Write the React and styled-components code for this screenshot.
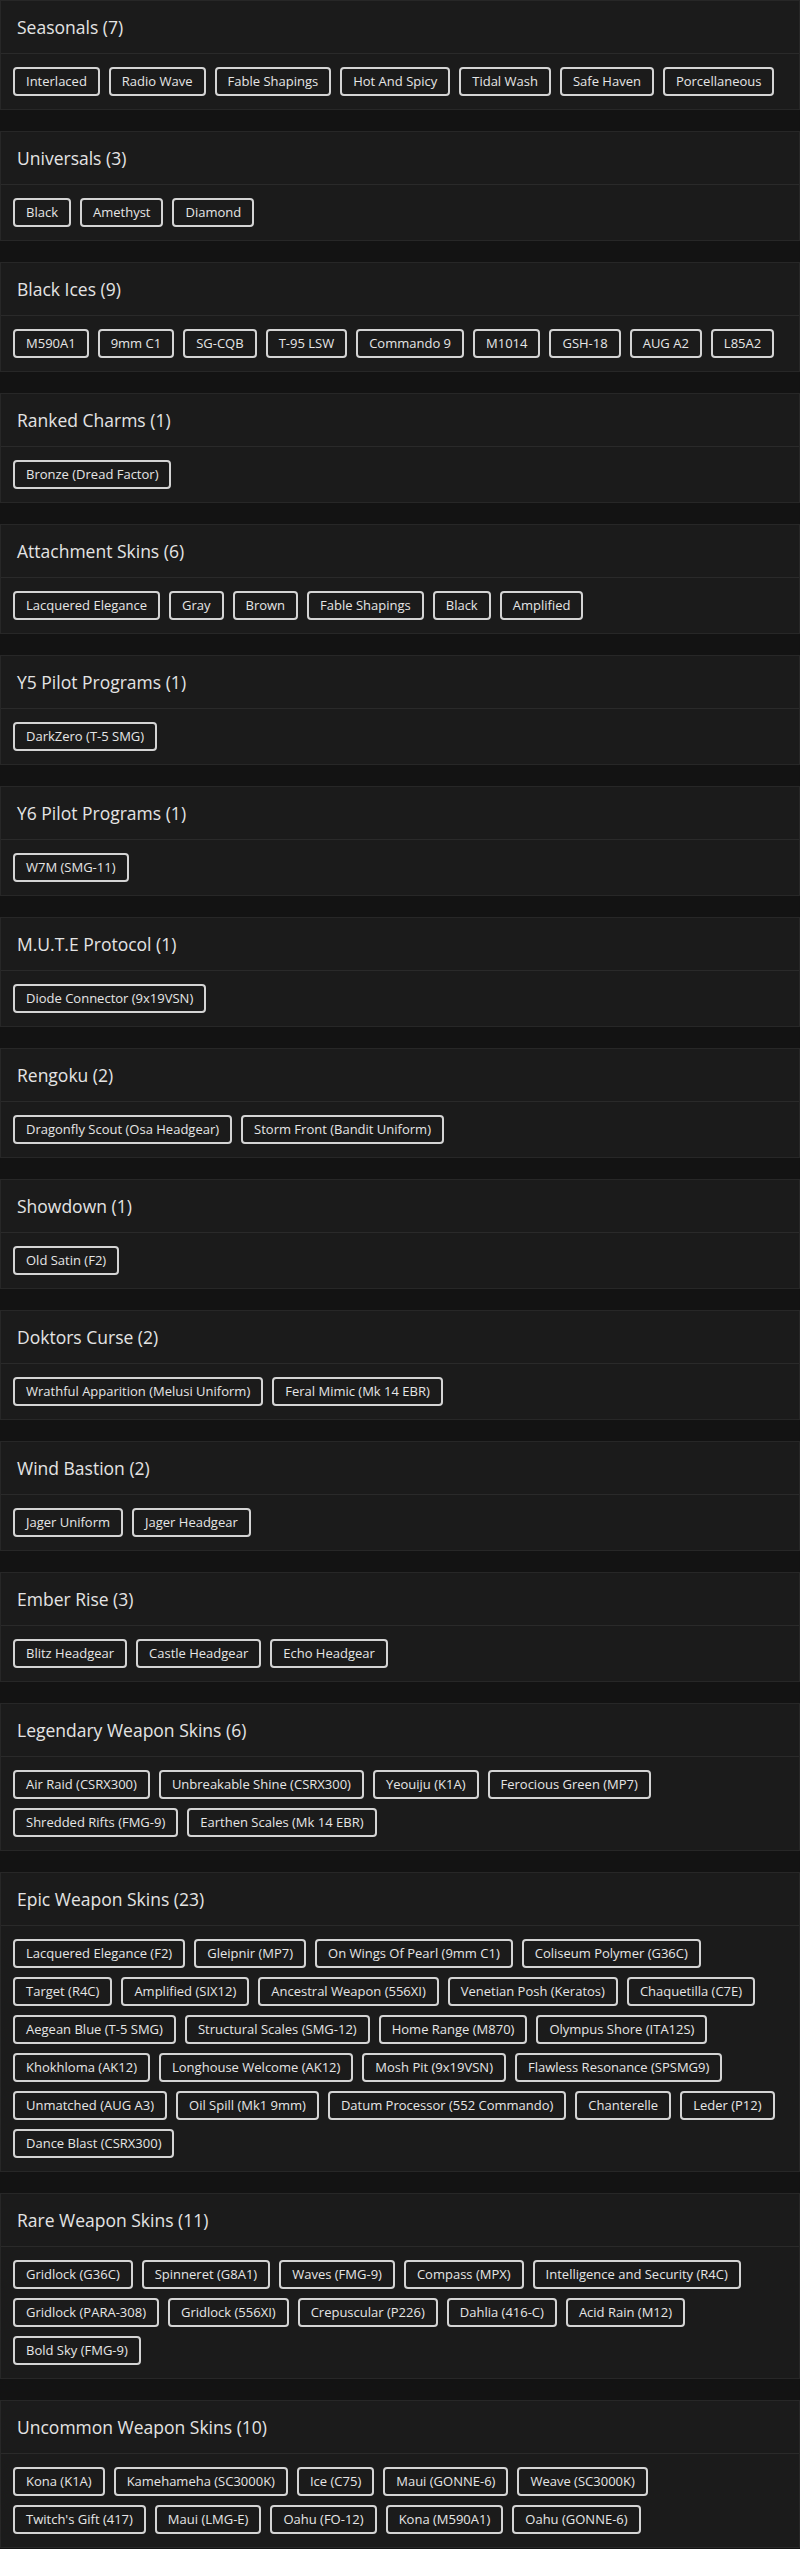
import React from 'react'
import styled, { createGlobalStyle } from 'styled-components'

const GlobalStyle = createGlobalStyle`
  body {
    margin: 0;
    background-color: #131313;
    font-family: "Open Sans", "Liberation Sans", sans-serif;
  }
`;

const sections = [
  { title: 'Seasonals', items: ['Interlaced', 'Radio Wave', 'Fable Shapings', 'Hot And Spicy', 'Tidal Wash', 'Safe Haven', 'Porcellaneous'] },
  { title: 'Universals', items: ['Black', 'Amethyst', 'Diamond'] },
  { title: 'Black Ices', items: ['M590A1', '9mm C1', 'SG-CQB', 'T-95 LSW', 'Commando 9', 'M1014', 'GSH-18', 'AUG A2', 'L85A2'] },
  { title: 'Ranked Charms', items: ['Bronze (Dread Factor)'] },
  { title: 'Attachment Skins', items: ['Lacquered Elegance', 'Gray', 'Brown', 'Fable Shapings', 'Black', 'Amplified'] },
  { title: 'Y5 Pilot Programs', items: ['DarkZero (T-5 SMG)'] },
  { title: 'Y6 Pilot Programs', items: ['W7M (SMG-11)'] },
  { title: 'M.U.T.E Protocol', items: ['Diode Connector (9x19VSN)'] },
  { title: 'Rengoku', items: ['Dragonfly Scout (Osa Headgear)', 'Storm Front (Bandit Uniform)'] },
  { title: 'Showdown', items: ['Old Satin (F2)'] },
  { title: 'Doktors Curse', items: ['Wrathful Apparition (Melusi Uniform)', 'Feral Mimic (Mk 14 EBR)'] },
  { title: 'Wind Bastion', items: ['Jager Uniform', 'Jager Headgear'] },
  { title: 'Ember Rise', items: ['Blitz Headgear', 'Castle Headgear', 'Echo Headgear'] },
  {
    title: 'Legendary Weapon Skins',
    items: ['Air Raid (CSRX300)', 'Unbreakable Shine (CSRX300)', 'Yeouiju (K1A)', 'Ferocious Green (MP7)', 'Shredded Rifts (FMG-9)', 'Earthen Scales (Mk 14 EBR)'],
  },
  {
    title: 'Epic Weapon Skins',
    items: [
      'Lacquered Elegance (F2)', 'Gleipnir (MP7)', 'On Wings Of Pearl (9mm C1)', 'Coliseum Polymer (G36C)',
      'Target (R4C)', 'Amplified (SIX12)', 'Ancestral Weapon (556XI)', 'Venetian Posh (Keratos)', 'Chaquetilla (C7E)',
      'Aegean Blue (T-5 SMG)', 'Structural Scales (SMG-12)', 'Home Range (M870)', 'Olympus Shore (ITA12S)',
      'Khokhloma (AK12)', 'Longhouse Welcome (AK12)', 'Mosh Pit (9x19VSN)', 'Flawless Resonance (SPSMG9)',
      'Unmatched (AUG A3)', 'Oil Spill (Mk1 9mm)', 'Datum Processor (552 Commando)', 'Chanterelle', 'Leder (P12)',
      'Dance Blast (CSRX300)',
    ],
  },
  {
    title: 'Rare Weapon Skins',
    items: [
      'Gridlock (G36C)', 'Spinneret (G8A1)', 'Waves (FMG-9)', 'Compass (MPX)', 'Intelligence and Security (R4C)',
      'Gridlock (PARA-308)', 'Gridlock (556XI)', 'Crepuscular (P226)', 'Dahlia (416-C)', 'Acid Rain (M12)',
      'Bold Sky (FMG-9)',
    ],
  },
  {
    title: 'Uncommon Weapon Skins',
    items: [
      'Kona (K1A)', 'Kamehameha (SC3000K)', 'Ice (C75)', 'Maui (GONNE-6)', 'Weave (SC3000K)',
      "Twitch's Gift (417)", 'Maui (LMG-E)', 'Oahu (FO-12)', 'Kona (M590A1)', 'Oahu (GONNE-6)',
    ],
  },
];

const Page = styled.div`
  display: flex;
  flex-direction: column;
  gap: 21px;
  padding-bottom: 1px;
`;

const Card = styled.section`
  background-color: #1b1b1b;
  border: 1px solid #272727;
`;

const Header = styled.div`
  padding: 15px 16px;
  border-bottom: 1px solid #2a2a2a;
`;

const Title = styled.h2`
  margin: 0;
  font-size: 17.5px;
  font-weight: 500;
  line-height: 22px;
  color: #e4e4e4;
`;

const Body = styled.div`
  display: flex;
  flex-wrap: wrap;
  gap: 9px;
  padding: 13px 12px;
`;

const Chip = styled.span`
  display: inline-flex;
  align-items: center;
  padding: 3px 11px;
  border: 2px solid #d4d4d4;
  border-radius: 4px;
  background-color: #1b1b1b;
  color: #e6e6e6;
  font-size: 13px;
  line-height: 19px;
  white-space: nowrap;
`;

const Section = ({ title, items }) => {
  return (
    <Card>
      <Header>
        <Title>{title} ({items.length})</Title>
      </Header>
      <Body>
        {items.map((item, i) => (
          <Chip key={i}>{item}</Chip>
        ))}
      </Body>
    </Card>
  )
}

const App = () => {
  return (
    <>
      <GlobalStyle />
      <Page>
        {sections.map((s) => (
          <Section key={s.title} title={s.title} items={s.items} />
        ))}
      </Page>
    </>
  )
}

export default App
